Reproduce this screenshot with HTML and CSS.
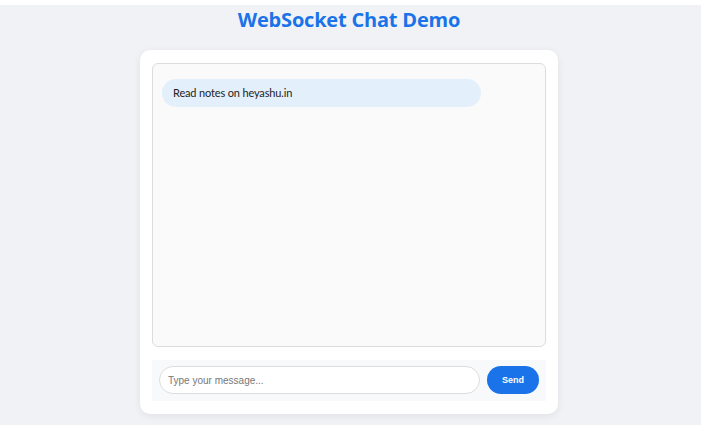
FILE: index.html
```html
<!DOCTYPE html>
<html>
<head>
<meta charset="utf-8">
<link rel="stylesheet" href="styles.css">
</head>
<body>
<div class="page">
  <h1 class="title">WebSocket Chat Demo</h1>
  <div class="card">
    <div class="messages">
      <div class="bubble">Read notes on heyashu.in</div>
    </div>
    <div class="composer">
      <input class="input" type="text" placeholder="Type your message...">
      <button class="send">Send</button>
    </div>
  </div>
</div>
</body>
</html>
```
FILE: styles.css
```css
html { background: #ffffff; }
body {
  margin: 0;
  padding-top: 5px;
  font-family: "Open Sans", "Noto Sans", sans-serif;
}
.page {
  background: #f0f2f5;
  min-height: 420px;
  padding-right: 3px;
  display: flex;
  flex-direction: column;
  align-items: center;
}
.title {
  margin: 0;
  padding-top: 2px;
  height: 43px;
  font-size: 20px;
  font-weight: 700;
  color: #1a73e8;
  line-height: 26px;
  letter-spacing: -0.2px;
}
.card {
  width: 394px;
  padding: 13px 12px 13px;
  background: #fff;
  border-radius: 10px;
  box-shadow: 0 2px 8px rgba(0,0,0,0.07);
  display: flex;
  flex-direction: column;
  gap: 13px;
}
.messages {
  box-sizing: border-box;
  height: 284px;
  border: 1px solid #dddddd;
  border-radius: 6px;
  background: #fafafa;
  padding: 15px 64px 0 9px;
}
.bubble {
  height: 28px;
  border-radius: 14px;
  background: #e3f0fc;
  padding: 0 11px;
  font-family: Lato, "Open Sans", sans-serif;
  font-size: 11px;
  letter-spacing: -0.15px;
  line-height: 28px;
  color: #222;
}
.composer {
  background: #f8f9fa;
  padding: 6px 7px 7px;
  display: flex;
  gap: 7px;
  align-items: center;
}
.input {
  flex: 1;
  height: 28px;
  box-sizing: border-box;
  border: 1px solid #dddddd;
  border-radius: 14px;
  padding: 0 8px;
  font-family: "Liberation Sans", Arial, sans-serif;
  font-size: 10px;
  background: #fff;
  outline: none;
}
.input::placeholder { color: #777; }
.send {
  width: 52px;
  height: 28px;
  border: none;
  border-radius: 14px;
  background: #1a73e8;
  color: #fff;
  font-family: "Liberation Sans", Arial, sans-serif;
  font-weight: 700;
  font-size: 9px;
  padding: 0;
}
```
